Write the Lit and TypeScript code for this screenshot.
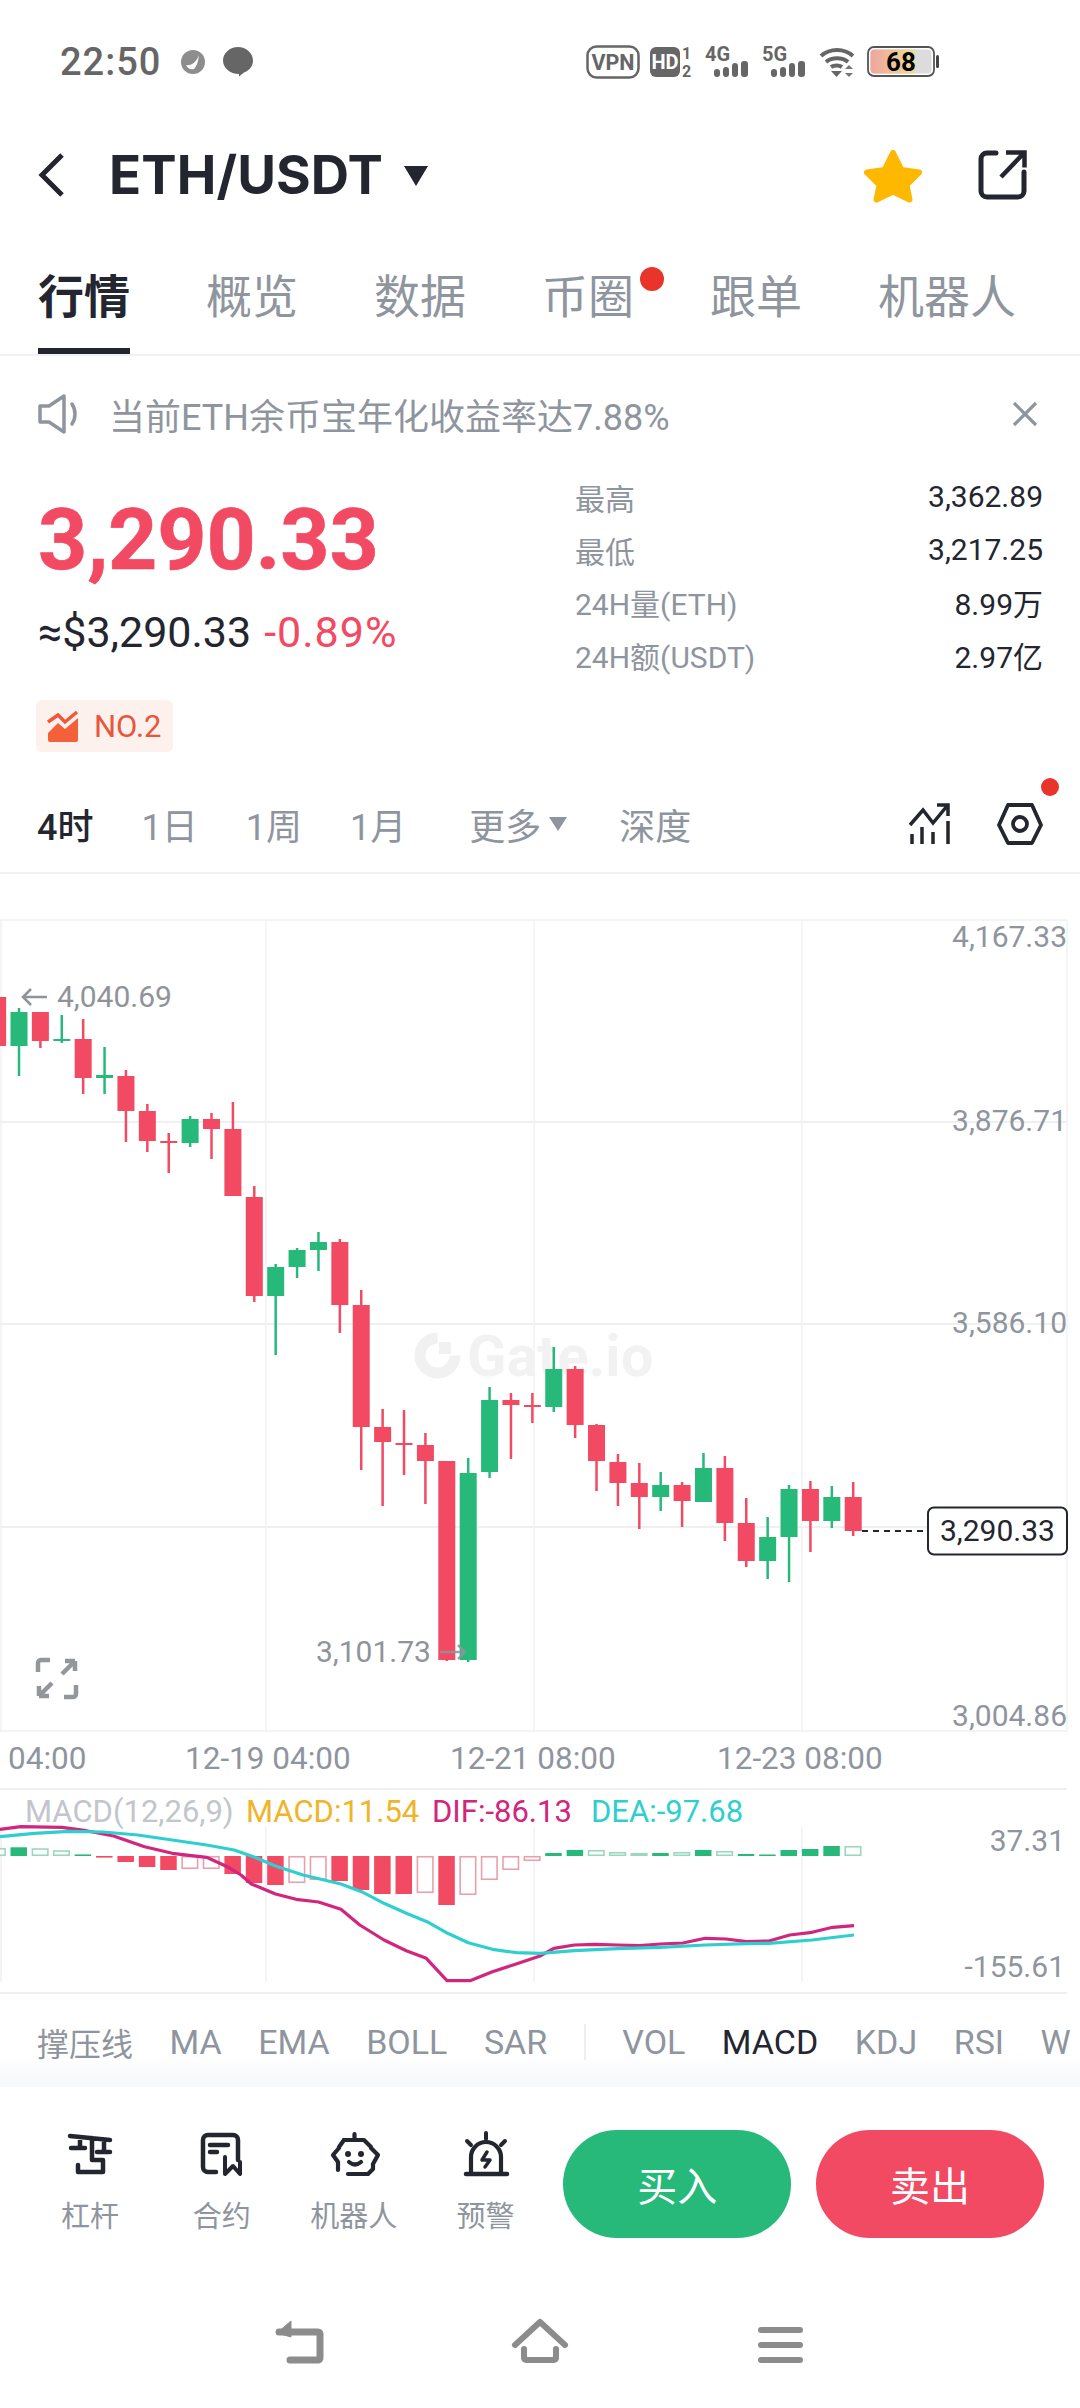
import { LitElement, html, css, svg, unsafeCSS } from "lit";
import { customElement } from "lit/decorators.js";

const RED = "#f24a63";
const GREEN = "#26b97a";
const RED_L = "#e9a0ae";
const GREEN_L = "#9ad8bd";

type C = [number, "r" | "g", number, number, number, number];
const CANDLES: C[] = [
  [-1, "r", 997, 1046, 997, 1046],
  [0, "g", 1012, 1046, 1008, 1076],
  [1, "r", 1012, 1041, 1012, 1048],
  [2, "g", 1039, 1041, 1015, 1043],
  [3, "r", 1039, 1078, 1019, 1094],
  [4, "g", 1075, 1078, 1047, 1094],
  [5, "r", 1076, 1111, 1070, 1142],
  [6, "r", 1111, 1141, 1104, 1152],
  [7, "r", 1141, 1143, 1133, 1173],
  [8, "g", 1119, 1143, 1116, 1147],
  [9, "r", 1119, 1129, 1113, 1159],
  [10, "r", 1129, 1196, 1102, 1196],
  [11, "r", 1197, 1296, 1186, 1302],
  [12, "g", 1267, 1296, 1264, 1355],
  [13, "g", 1250, 1267, 1248, 1278],
  [14, "g", 1242, 1250, 1232, 1271],
  [15, "r", 1242, 1305, 1239, 1333],
  [16, "r", 1305, 1427, 1290, 1470],
  [17, "r", 1427, 1442, 1409, 1506],
  [18, "r", 1443, 1445, 1410, 1475],
  [19, "r", 1445, 1461, 1433, 1504],
  [20, "r", 1461, 1660, 1461, 1661],
  [21, "g", 1473, 1660, 1458, 1662],
  [22, "g", 1400, 1472, 1387, 1478],
  [23, "r", 1400, 1405, 1393, 1459],
  [24, "r", 1405, 1407, 1393, 1423],
  [25, "g", 1369, 1407, 1347, 1412],
  [26, "r", 1369, 1425, 1366, 1438],
  [27, "r", 1425, 1461, 1424, 1491],
  [28, "r", 1462, 1483, 1454, 1506],
  [29, "r", 1483, 1497, 1463, 1529],
  [30, "g", 1485, 1497, 1472, 1511],
  [31, "r", 1485, 1501, 1482, 1527],
  [32, "g", 1468, 1502, 1453, 1502],
  [33, "r", 1468, 1523, 1456, 1541],
  [34, "r", 1523, 1561, 1498, 1567],
  [35, "g", 1537, 1561, 1517, 1579],
  [36, "g", 1489, 1537, 1485, 1582],
  [37, "r", 1489, 1521, 1481, 1552],
  [38, "g", 1497, 1521, 1486, 1528],
  [39, "r", 1497, 1531, 1482, 1536],
];

type H = [number, number, boolean];
const HIST: H[] = [
  [-1, 8, false], [0, 8.7, true], [1, 7.7, false], [2, 5.7, false], [3, 1.6, true], [4, -1.6, true],
  [5, -6, true], [6, -11, true], [7, -14, true], [8, -13, false], [9, -13, false], [10, -18, true],
  [11, -27, true], [12, -29, true], [13, -27, false], [14, -24, false], [15, -25, true], [16, -34, true],
  [17, -38, true], [18, -38, true], [19, -37, false], [20, -49, true], [21, -39, false], [22, -24, false],
  [23, -14, false], [24, -5, false], [25, 3, true], [26, 6, true], [27, 6, false], [28, 4, false],
  [29, 3, false], [30, 3, true], [31, 4, false], [32, 6, true], [33, 5, false], [34, 2, true],
  [35, 1.5, true], [36, 6, true], [37, 7, true], [38, 10, true], [39, 10, false],
];

const cx = (i: number) => 19 + 21.39 * i;

const zl = (v: [number, number][], off = 0) => v.map(([x, y]) => `${(off + x / 2.904).toFixed(1)},${(1770 + y / 3).toFixed(1)}`);

const DIF = [
  ...zl([[0,178],[60,170],[180,172],[250,182],[330,198],[420,230],[500,250],[600,262],[660,290],[700,315],[730,342],[800,372],[860,388],[925,396],[990,418],[1045,465],[1115,510],[1180,542],[1238,565],[1298,632],[1365,632],[1430,605],[1490,585]]),
  ...zl([[0,558],[40,535],[100,525],[160,523],[225,525],[290,527],[350,522],[415,519],[480,505],[540,507],[600,515],[665,513],[725,495],[790,487],[850,472],[912,467]], 540),
].join(" ");
const DEA = [
  ...zl([[0,200],[100,190],[200,184],[300,186],[400,195],[500,210],[600,225],[680,240],[740,262],[800,288],[880,315],[990,342],[1050,365],[1115,400],[1180,430],[1240,455],[1300,490],[1360,518],[1430,538],[1500,548]]),
  ...zl([[0,550],[100,542],[225,536],[350,532],[480,525],[600,521],[665,520],[790,510],[912,495]], 540),
].join(" ");

function chart() {
  const hLines = [920, 1122, 1324, 1527, 1731];
  const vLines = [1, 266, 534, 802, 1067];
  return html`<svg class="chart" width="1080" height="1126" viewBox="0 874 1080 1126">
    ${hLines.map((y) => svg`<line x1="0" x2="1067" y1=${y} y2=${y} stroke=${y === 920 || y === 1731 ? "#f0f1f3" : "#e9ebee"} stroke-width="1.5"/>`)}
    ${vLines.map((x) => svg`<line x1=${x} x2=${x} y1="920" y2="1731" stroke="#f1f2f4" stroke-width="1.5"/>`)}
    <path d="M437.500 1338A17.500 17.500 0 1 0 455 1355.500" fill="none" stroke="#f1f1f1" stroke-width="11"/>
    <rect x="439" y="1342" width="12" height="12" fill="#f1f1f1"/>
    <text x="467" y="1376" font-size="58" font-weight="700" fill="#f2f2f2">Gate.io</text>
    <g class="axis">
      <text x="1067" y="947" text-anchor="end">4,167.33</text>
      <text x="1067" y="1131" text-anchor="end">3,876.71</text>
      <text x="1067" y="1333" text-anchor="end">3,586.10</text>
      <text x="1067" y="1726" text-anchor="end">3,004.86</text>
    </g>
    <g class="tm">
      <text x="8" y="1769">04:00</text>
      <text x="185" y="1769">12-19 04:00</text>
      <text x="450" y="1769">12-21 08:00</text>
      <text x="717" y="1769">12-23 08:00</text>
    </g>
    ${CANDLES.map(([i, c, t, b, wt, wb]) => {
      const x = cx(i);
      const col = c === "r" ? RED : GREEN;
      return svg`<line x1=${x} x2=${x} y1=${wt} y2=${wb} stroke=${col} stroke-width="2.5"/>
        <rect x=${x - 8.5} y=${t} width="17" height=${Math.max(b - t, 2)} fill=${col}/>`;
    })}
    <g class="note">
      <path d="M47 997H23M31 989l-8 8 8 8" fill="none" stroke="#909399" stroke-width="2.5"/>
      <text x="57" y="1007">4,040.69</text>
      <text x="316" y="1662">3,101.73</text>
      <path d="M440 1652h25M458 1645l7 7-7 7" fill="none" stroke="#909399" stroke-width="2.5" opacity=".85"/>
    </g>
    <path d="M38 1672v-9a3 3 0 0 1 3-3h9M76 1685v9a3 3 0 0 1-3 3h-9M62 1674l13-13M75 1661h-10M75 1661v10M52 1683l-13 13M39 1696h10M39 1696v-10" fill="none" stroke="#93969b" stroke-width="4.500"/>
    <line x1="862" x2="928" y1="1531" y2="1531" stroke="#23252f" stroke-width="2" stroke-dasharray="6 5"/>
    <rect x="928" y="1507.500" width="139" height="47" rx="6" fill="#fff" stroke="#23252f" stroke-width="2"/>
    <text class="last" x="997.500" y="1541" text-anchor="middle">3,290.33</text>

    <line x1="0" x2="1067" y1="1789" y2="1789" stroke="#e9ebee" stroke-width="1.500"/>
    <line x1="0" x2="1067" y1="1993" y2="1993" stroke="#e9ebee" stroke-width="1.500"/>
    ${[1, 266, 534, 802].map((x) => svg`<line x1=${x} x2=${x} y1="1827" y2="1982" stroke="#eff0f2" stroke-width="1.5"/>`)}
    <g class="legend">
      <text x="25" y="1822" fill="#c2c6cc">MACD(12,26,9)</text>
      <text x="246" y="1822" fill="#f0b429">MACD:11.54</text>
      <text x="432" y="1822" fill="#d1257e">DIF:-86.13</text>
      <text x="591" y="1822" fill="#2fcfd0">DEA:-97.68</text>
    </g>
    <g class="axis">
      <text x="1065" y="1851" text-anchor="end">37.31</text>
      <text x="1065" y="1977" text-anchor="end">-155.61</text>
    </g>
    ${HIST.map(([i, h, solid]) => {
      const x = cx(i) - 8;
      const up = h > 0;
      const top = up ? 1856 - h : 1856;
      const abs = Math.abs(h);
      return solid
        ? svg`<rect x=${x - 0.5} y=${top} width="16.5" height=${abs} fill=${up ? GREEN : RED}/>`
        : svg`<rect x=${x} y=${top + 0.75} width="15.5" height=${Math.max(abs - 1.5, 1)} fill="#fff" stroke=${up ? GREEN_L : RED_L} stroke-width="1.6"/>`;
    })}
    <polyline points=${DIF} fill="none" stroke="#d1257e" stroke-width="3.2" stroke-linejoin="round"/>
    <polyline points=${DEA} fill="none" stroke="#2fcfd0" stroke-width="3.2" stroke-linejoin="round"/>
  </svg>`;
}

@customElement("app-root")
export class AppRoot extends LitElement {
  static styles = css`
    :host {
      display: block;
      width: 1080px;
      height: 2408px;
      background: #fff;
      overflow: hidden;
      font-family: Roboto, "Noto Sans CJK SC", sans-serif;
      color: #23252f;
    }
    svg { display: block; flex: none; overflow: visible; }
    .status {
      height: 124px;
      display: flex;
      align-items: center;
      padding: 0 141px 0 60px;
      color: #666;
    }
    .time { font-size: 38px; font-weight: 500; letter-spacing: 1px; width: 120px; }
    .status .bubble { margin-left: 17px; }
    .status .right { margin-left: auto; display: flex; align-items: center; }
    .status text { font-family: Roboto, sans-serif; font-weight: 700; fill: #666; }
    .s10 { margin-left: 10px; }
    .s12 { margin-left: 12px; }
    .header {
      height: 102px;
      display: flex;
      align-items: center;
      padding: 0 53px 0 39px;
    }
    .title { font-size: 53px; font-weight: 700; margin-left: 44px; letter-spacing: 0.1px; font-family: Inter, Roboto, sans-serif; }
    .caret { margin-left: 20px; }
    .star { margin-left: auto; }
    .share { margin-left: 55px; }
    .tabs {
      height: 130px;
      box-sizing: border-box;
      display: flex;
      gap: 76px;
      padding: 0 38px;
      border-bottom: 2px solid #f0f1f3;
    }
    .tab {
      position: relative;
      height: 128px;
      box-sizing: border-box;
      padding-top: 40px;
      font-size: 46px;
      line-height: 62px;
      color: #8f959e;
      white-space: nowrap;
    }
    .tab.on { color: #23252f; font-weight: 700; border-bottom: 6px solid #23252f; }
    .dot { position: absolute; border-radius: 50%; background: #e8342a; }
    .tab .dot { width: 24px; height: 24px; top: 41px; right: -30px; }
    .notice {
      height: 116px;
      display: flex;
      align-items: center;
      padding: 0 42px 0 38px;
      color: #8f959e;
      font-size: 36px;
    }
    .notice span { margin-left: 29px; }
    .notice .x { margin-left: auto; }
    .summary {
      height: 306px;
      display: flex;
      justify-content: space-between;
      padding: 0 37px 0 38px;
      box-sizing: border-box;
    }
    .price { font-size: 86px; line-height: 100px; font-weight: 700; color: ${unsafeCSS(RED)}; margin-top: 18px; letter-spacing: -0.2px; -webkit-text-stroke: 0.6px ${unsafeCSS(RED)}; }
    .sub { font-size: 43px; line-height: 50px; margin-top: 17px; display: flex; gap: 13px; white-space: nowrap; }
    .sub .chg { color: ${unsafeCSS(RED)}; letter-spacing: 1px; }
    .badge {
      margin-top: 43px;
      margin-left: -2px;
      width: 137px;
      height: 52px;
      background: #fdf1ed;
      border-radius: 6px;
      display: flex;
      align-items: center;
      padding-left: 12px;
      box-sizing: border-box;
      color: #e8563e;
      font-size: 31px;
      gap: 16px;
    }
    .stats { width: 468px; margin-top: -1.5px; }
    .row { height: 52.7px; display: flex; align-items: center; justify-content: space-between; font-size: 30px; }
    .row span:first-child { color: #8f959e; }
    .times {
      height: 96px;
      box-sizing: border-box;
      display: flex;
      align-items: center;
      gap: 48px;
      padding: 0 37px 2px;
      font-size: 36px;
      color: #8f959e;
      border-bottom: 2px solid #f0f1f3;
      position: relative;
    }
    .times .on { color: #23252f; font-weight: 500; }
    .times .more { margin: 0 4px 0 15px; display: flex; align-items: center; gap: 8px; }
    .times .ic { margin-left: auto; display: flex; gap: 47px; }
    .times .dot { width: 18px; height: 18px; top: 0; right: 21px; }
    .chart text { font-family: Roboto, sans-serif; }
    .axis text { font-size: 30px; fill: #8f959e; }
    .tm text { font-size: 31.5px; fill: #8f959e; }
    .note text { font-size: 30px; fill: #909399; }
    .last { font-size: 30px; fill: #23252f; }
    .legend text { font-size: 31px; }
    .inds {
      height: 87px;
      box-sizing: border-box;
      display: flex;
      align-items: center;
      gap: 36.5px;
      padding: 0 0 4px 37px;
      font-size: 34px;
      color: #8f959e;
      white-space: nowrap;
      overflow: hidden;
      background: linear-gradient(#fff 60%, #f7f8fa);
    }
    .inds .cn { font-size: 32px; }
    .inds .sep { width: 2px; height: 36px; background: #eceef0; flex: none; }
    .inds .on { color: #23252f; }
    .bottom {
      height: 193px;
      box-sizing: border-box;
      display: flex;
      padding: 43px 36px 0 24px;
    }
    .tool {
      width: 132px;
      height: 108px;
      display: flex;
      flex-direction: column;
      align-items: center;
      color: #8f959e;
      font-size: 29px;
      line-height: 40px;
      gap: 17px;
    }
    .btn {
      width: 228px;
      height: 108px;
      border-radius: 54px;
      color: #fff;
      font-size: 40px;
      display: flex;
      align-items: center;
      justify-content: center;
    }
    .buy { background: ${unsafeCSS(GREEN)}; margin-left: 12px; }
    .sell { background: ${unsafeCSS(RED)}; margin-left: 25px; }
    .nav { height: 128px; box-sizing: border-box; display: flex; padding: 40px 0 0 276px; gap: 189px; }
  `;

  render() {
    const I = "#23252f";
    return html`
      <div class="status">
        <span class="time">22:50</span>
        <svg width="26" height="26" viewBox="180 50 26 26">
          <circle cx="193" cy="63" r="12" fill="#8d8d8d"/>
          <path d="M186 66c5 1 10-2 13-10-1 7-2 11-5 14-3 1-6 0-8-4z" fill="#fff"/>
        </svg>
        <svg class="bubble" width="30" height="30" viewBox="222 48 30 30">
          <path d="M237 48c8 0 15 6 15 13.500 0 6-4 10-9 12l-5 4v-2.500c-9 0-16-6-16-13.500s7-13.500 15-13.500z" fill="#666"/>
        </svg>
        <div class="right">
          <svg width="54" height="34" viewBox="0 0 54 34">
            <rect x="1.500" y="1.500" width="51" height="31" rx="9" fill="none" stroke="#666" stroke-width="2.500"/>
            <text x="27" y="24.500" text-anchor="middle" font-size="21.500">VPN</text>
          </svg>
          <svg class="s10" width="43" height="32" viewBox="0 0 43 32">
            <rect x="0" y="1" width="30" height="30" rx="6" fill="#666"/>
            <text x="15" y="23" text-anchor="middle" font-size="20" style="fill:#fff">HD</text>
            <text x="32" y="13" font-size="16">1</text>
            <text x="32" y="31" font-size="16">2</text>
          </svg>
          <svg class="s12" width="45" height="34" viewBox="0 0 45 34">
            <text x="0" y="16" font-size="20">4G</text>
            <rect x="9" y="24" width="6" height="8" rx="3" fill="#666"/><rect x="18" y="22" width="6" height="10" rx="3" fill="#666"/><rect x="27" y="18" width="6" height="14" rx="3" fill="#666"/><rect x="36" y="16" width="7" height="16" rx="3" fill="#666"/>
          </svg>
          <svg class="s12" width="45" height="34" viewBox="0 0 45 34">
            <text x="0" y="16" font-size="20">5G</text>
            <rect x="9" y="24" width="6" height="8" rx="3" fill="#666"/><rect x="18" y="22" width="6" height="10" rx="3" fill="#666"/><rect x="27" y="18" width="6" height="14" rx="3" fill="#666"/><rect x="36" y="16" width="7" height="16" rx="3" fill="#666"/>
          </svg>
          <svg class="s12" width="36" height="30" viewBox="0 0 36 30">
            <path d="M2 9c9-8 23-8 32 0M7 15c6-5 16-5 22 0M12 20c3-2 8-2 11 0" fill="none" stroke="#666" stroke-width="4"/>
            <path d="M12 24h11l-5.500 6z" fill="#666"/>
            <path d="M30 18l4 4h-8zM30 30l4-4h-8z" fill="#777"/>
          </svg>
          <svg class="s12" width="72" height="32" viewBox="0 0 72 32">
            <defs><linearGradient id="bat" x1="0" x2="1"><stop offset="0" stop-color="#efa59f"/><stop offset="1" stop-color="#eedc94"/></linearGradient></defs>
            <rect x="1" y="1" width="66" height="29" rx="6" fill="#fff" stroke="#555" stroke-width="1.800"/>
            <rect x="3.500" y="3.500" width="61" height="24" rx="4" fill="#dcdcdc"/>
            <path d="M7.500 3.500H48v24H7.500a4 4 0 0 1-4-4v-16a4 4 0 0 1 4-4z" fill="url(#bat)"/>
            <rect x="69" y="9" width="3" height="13" rx="1.500" fill="#444"/>
            <text x="34" y="25" text-anchor="middle" font-size="26" style="fill:#000">68</text>
          </svg>
        </div>
      </div>

      <div class="header">
        <svg width="26" height="44" viewBox="39 152 26 44"><path d="M62 154 42 174l20 20" fill="none" stroke=${I} stroke-width="5"/></svg>
        <span class="title">ETH/USDT</span>
        <svg class="caret" width="26" height="21" viewBox="0 0 26 21"><path d="M1 1h24L13 21z" fill=${I}/></svg>
        <svg class="star" width="58" height="56" viewBox="865 144 58 56">
          <path d="M894 150l8.500 17 17.500 2.500-12.500 12.500 3 14.500-16.500-8-16.500 8 3-14.500-12.500-12.500 17.500-2.500z" fill="#ffb800" stroke="#ffb800" stroke-width="6" stroke-linejoin="round"/>
        </svg>
        <svg class="share" width="50" height="52" viewBox="977 147 50 52">
          <path d="M996 151h-9a6 6 0 0 0-6 6v32a6 6 0 0 0 6 6h31a6 6 0 0 0 6-6v-19" fill="none" stroke=${I} stroke-width="5" stroke-linecap="round"/>
          <path d="M1001 175l22-23M1006 150.500h18.500v15" fill="none" stroke=${I} stroke-width="4.500"/>
        </svg>
      </div>

      <div class="tabs">
        <div class="tab on">行情</div>
        <div class="tab">概览</div>
        <div class="tab">数据</div>
        <div class="tab">币圈<i class="dot"></i></div>
        <div class="tab">跟单</div>
        <div class="tab">机器人</div>
      </div>

      <div class="notice">
        <svg width="42" height="40" viewBox="38 395 42 40">
          <path d="M40 407h9l15-10v36l-15-10h-9z" fill="none" stroke="#8f959e" stroke-width="3.500" stroke-linejoin="round"/>
          <path d="M72 405c4 6 4 14 0 20" fill="none" stroke="#8f959e" stroke-width="3.500" stroke-linecap="round"/>
        </svg>
        <span>当前ETH余币宝年化收益率达7.88%</span>
        <svg class="x" width="26" height="26" viewBox="1012 404 26 26"><path d="M1014 406l22 22M1036 406l-22 22" stroke="#8f959e" stroke-width="3.200"/></svg>
      </div>

      <div class="summary">
        <div>
          <div class="price">3,290.33</div>
          <div class="sub"><span>≈$3,290.33</span><span class="chg">-0.89%</span></div>
          <div class="badge">
            <svg width="30" height="32" viewBox="48 710 30 32">
              <path d="M48 733l10-10 7 6 13-11v22a2 2 0 0 1-2 2H50a2 2 0 0 1-2-2z" fill="#f4603a"/>
              <path d="M48 722l10-7 7 7 12-10" fill="none" stroke="#f0583a" stroke-width="3.500"/>
            </svg>
            <span>NO.2</span>
          </div>
        </div>
        <div class="stats">
          <div class="row"><span>最高</span><span>3,362.89</span></div>
          <div class="row"><span>最低</span><span>3,217.25</span></div>
          <div class="row"><span>24H量(ETH)</span><span>8.99万</span></div>
          <div class="row"><span>24H额(USDT)</span><span>2.97亿</span></div>
        </div>
      </div>

      <div class="times">
        <span class="on">4时</span>
        <span>1日</span>
        <span>1周</span>
        <span>1月</span>
        <span class="more">更多<svg width="18" height="14" viewBox="0 0 18 14"><path d="M0 0h18L9 14z" fill="#8f959e"/></svg></span>
        <span>深度</span>
        <span class="ic">
          <svg width="40" height="42" viewBox="910 804 40 42">
            <path d="M910 826l13-15 10 13 14-17M937 806h11v11" fill="none" stroke=${I} stroke-width="3.500"/>
            <path d="M912 835v10M922 828v17M933 833v12M948 822v23" stroke=${I} stroke-width="3.500"/>
          </svg>
          <svg width="46" height="42" viewBox="997 804 46 42">
            <path d="M1008 806h24l9 20-9 18h-24l-9-18z" fill="none" stroke=${I} stroke-width="3.800" stroke-linejoin="round"/>
            <circle cx="1020" cy="825" r="7" fill="none" stroke=${I} stroke-width="3.800"/>
          </svg>
        </span>
        <i class="dot"></i>
      </div>

      ${chart()}

      <div class="inds">
        <span class="cn">撑压线</span><span>MA</span><span>EMA</span><span>BOLL</span><span>SAR</span><i class="sep"></i>
        <span>VOL</span><span class="on">MACD</span><span>KDJ</span><span>RSI</span><span>W</span>
      </div>

      <div class="bottom">
        <div class="tool">
          <svg width="50" height="50" viewBox="65 2133 50 50">
            <g fill="none" stroke=${I} stroke-width="4.500" stroke-linecap="round" stroke-linejoin="round">
              <path d="M70 2139l40 4M80 2141v10M71 2151h14M92 2141v22h11v12H78v-7M104 2143v12M97 2155h13"/>
            </g>
          </svg>
          <span>杠杆</span>
        </div>
        <div class="tool">
          <svg width="50" height="50" viewBox="197 2133 50 50">
            <g fill="none" stroke=${I} stroke-linecap="round" stroke-linejoin="round" stroke-width="4.500">
              <path d="M238 2163v-20a5 5 0 0 0-5-5h-25a5 5 0 0 0-5 5v27a5 5 0 0 0 5 5h8"/>
              <path d="M210 2148h18M210 2155h7"/>
              <path d="M225 2160v17l8-8 7 8v-12" stroke-width="4"/>
            </g>
          </svg>
          <span>合约</span>
        </div>
        <div class="tool">
          <svg width="50" height="50" viewBox="328 2133 50 50">
            <g fill="none" stroke=${I} stroke-width="4.200" stroke-linecap="round" stroke-linejoin="round">
              <path d="M353.500 2137v5M343 2143h20l7 7v1l7 7-5 9v5l-5 5h-20"/>
              <path d="M343 2143l-5 7v1l-6 7 5 7v8"/>
              <path d="M348 2165q6 5 12 0"/>
            </g>
            <circle cx="347" cy="2157" r="3" fill=${I}/><circle cx="360" cy="2157" r="3" fill=${I}/>
          </svg>
          <span>机器人</span>
        </div>
        <div class="tool">
          <svg width="50" height="50" viewBox="461 2133 50 50">
            <g fill="none" stroke=${I} stroke-linecap="round" stroke-linejoin="round">
              <path d="M471 2176v-16a15 15 0 0 1 30 0v16" stroke-width="4.200"/>
              <path d="M466 2177h41" stroke-width="4.500"/>
              <path d="M486 2136v6M467 2144l4 4M505 2144l-4 4" stroke-width="4"/>
              <path d="M487 2155l-5 8h8l-5 7" stroke-width="3.500"/>
            </g>
          </svg>
          <span>预警</span>
        </div>
        <div class="btn buy">买入</div>
        <div class="btn sell">卖出</div>
      </div>

      <div class="nav">
        <svg width="47" height="44" viewBox="276 2320 47 44">
          <path d="M279 2332h39a2 2 0 0 1 2 2v24a2 2 0 0 1-2 2h-28" fill="none" stroke="#8c8c8c" stroke-width="7" stroke-linecap="round"/>
          <path d="M277 2333l14-12v16z" fill="#8c8c8c" stroke="#8c8c8c" stroke-width="1" stroke-linejoin="round"/>
        </svg>
        <svg width="57" height="44" viewBox="512 2320 57 44">
          <path d="M515 2345l25-23 25 23M524 2349v9a2 2 0 0 0 2 2h28a2 2 0 0 0 2-2v-9" fill="none" stroke="#8c8c8c" stroke-width="6" stroke-linecap="round" stroke-linejoin="round"/>
        </svg>
        <svg width="45" height="44" viewBox="758 2320 45 44">
          <path d="M761 2330h39M761 2345h39M761 2360h39" stroke="#8c8c8c" stroke-width="6" stroke-linecap="round"/>
        </svg>
      </div>
    `;
  }
}
